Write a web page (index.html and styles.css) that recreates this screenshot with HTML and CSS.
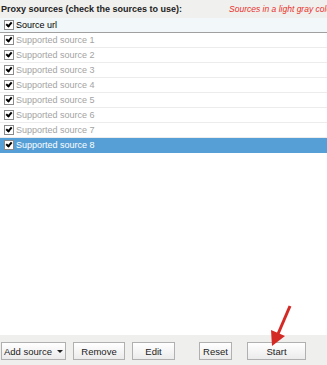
FILE: index.html
```html
<!DOCTYPE html>
<html lang="en">
<head>
    <meta charset="UTF-8">
    <title>Proxy sources</title>
    <link rel="stylesheet" href="styles.css">
</head>
<body>
    <div class="panel">
        <!-- Title bar -->
        <div class="title-bar">
            <span class="title">Proxy sources (check the sources to use):</span>
            <span class="note">Sources in a light gray color are supported sources</span>
        </div>

        <!-- Source list -->
        <div class="list">
            <div class="row head"><span class="check"></span>Source url</div>
            <div class="row muted"><span class="check"></span>Supported source 1</div>
            <div class="row muted"><span class="check"></span>Supported source 2</div>
            <div class="row muted"><span class="check"></span>Supported source 3</div>
            <div class="row muted"><span class="check"></span>Supported source 4</div>
            <div class="row muted"><span class="check"></span>Supported source 5</div>
            <div class="row muted"><span class="check"></span>Supported source 6</div>
            <div class="row muted"><span class="check"></span>Supported source 7</div>
            <div class="row selected"><span class="check"></span>Supported source 8</div>
        </div>

        <!-- Toolbar -->
        <div class="toolbar">
            <button class="btn add">Add source <span class="caret"></span></button>
            <button class="btn remove">Remove</button>
            <button class="btn edit">Edit</button>
            <button class="btn reset">Reset</button>
            <button class="btn start">Start</button>
        </div>

        <svg class="arrow" width="40" height="50" viewBox="0 0 40 50">
            <line x1="28" y1="2" x2="16" y2="30" stroke="#d42a25" stroke-width="3"/>
            <polygon points="9,26 23,32 10,42" fill="#d42a25"/>
        </svg>
    </div>
</body>
</html>
```

FILE: styles.css
```css
html, body {
    margin: 0;
    padding: 0;
}

body {
    font-family: "Liberation Sans", Arial, sans-serif;
    font-size: 9px;
    background-color: #ffffff;
}

.panel {
    position: relative;
    width: 327px;
    height: 365px;
    display: flex;
    flex-direction: column;
    overflow: hidden;
}

.title-bar {
    height: 18px;
    background-color: #f0f0ee;
    display: flex;
    align-items: center;
    padding-left: 1px;
    white-space: nowrap;
    overflow: hidden;
}

.title {
    font-weight: bold;
    font-size: 9px;
    color: #222;
}

.note {
    margin-left: 47px;
    color: #e8302a;
    font-style: italic;
    font-size: 8.5px;
}

.list {
    flex: 1;
    background-color: #ffffff;
}

.row {
    height: 14px;
    border-bottom: 1px solid #ececec;
    display: flex;
    align-items: center;
    padding-left: 4px;
    font-size: 9px;
    color: #000;
}

.row.head {
    background-color: #f2f7fa;
    border-bottom: 1px solid #a0a0a0;
}

.row.muted {
    color: #a3a3a3;
}

.row.selected {
    background-color: #569fd6;
    color: #ffffff;
    border-bottom-color: #569fd6;
}

.check {
    width: 8px;
    height: 8px;
    border: 1px solid #8a8a8a;
    background: #fff;
    margin-right: 2px;
    position: relative;
}

.check::after {
    content: "";
    position: absolute;
    left: 2px;
    top: 0px;
    width: 2px;
    height: 4px;
    border: solid #000;
    border-width: 0 2px 2px 0;
    transform: rotate(40deg);
}

.toolbar {
    height: 30px;
    background-color: #efefed;
    display: flex;
    align-items: center;
    padding-left: 1px;
    padding-top: 2px;
    box-sizing: border-box;
}

.btn {
    height: 18px;
    padding: 0;
    border: 1px solid #b0b0b0;
    background: linear-gradient(#ffffff, #ecebeb);
    font-family: "Liberation Sans", Arial, sans-serif;
    font-size: 9.5px;
    color: #222;
    display: flex;
    align-items: center;
    justify-content: center;
}

.add {
    width: 65px;
}

.caret {
    display: inline-block;
    margin-left: 5px;
    border-left: 3px solid transparent;
    border-right: 3px solid transparent;
    border-top: 3px solid #222;
}

.remove {
    width: 52px;
    margin-left: 7px;
}

.edit {
    width: 43px;
    margin-left: 7px;
}

.reset {
    width: 33px;
    margin-left: 24px;
}

.start {
    width: 59px;
    margin-left: 15px;
}

.arrow {
    position: absolute;
    left: 262px;
    top: 304px;
}
```
